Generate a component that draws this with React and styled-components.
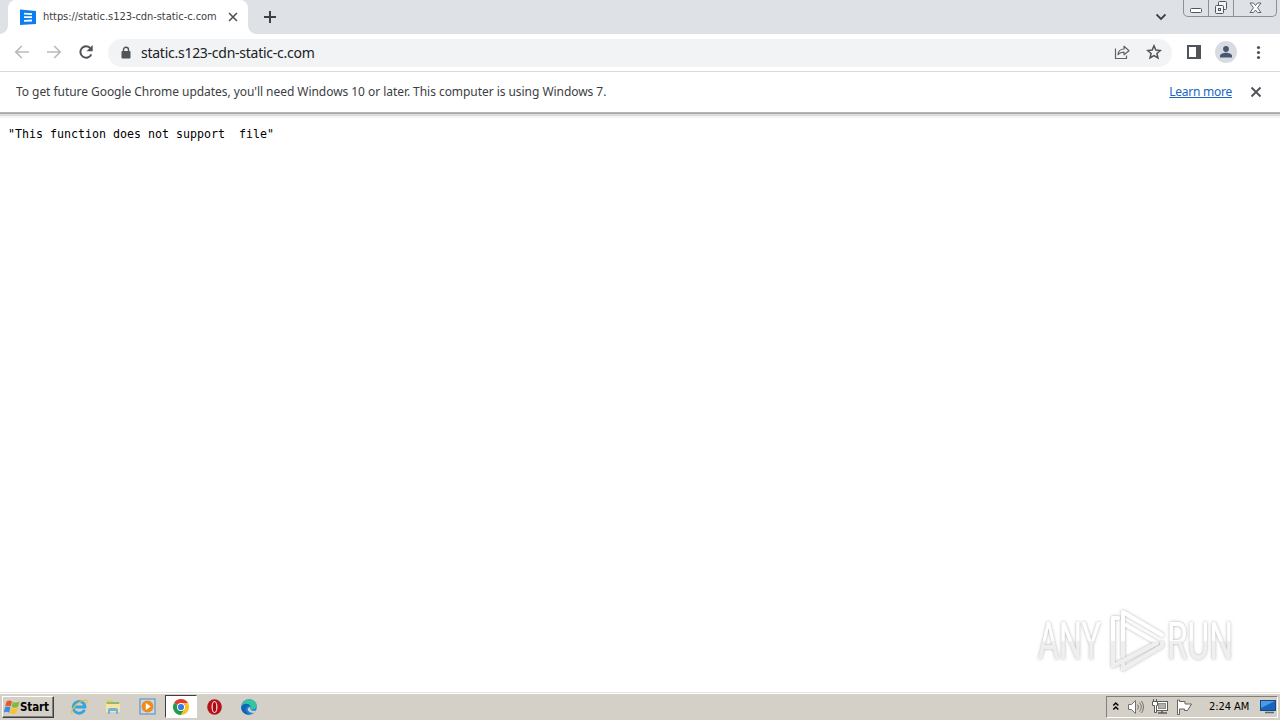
import React from 'react';
import styled, { createGlobalStyle } from 'styled-components';

const GlobalStyle = createGlobalStyle`
  * {
    box-sizing: border-box;
  }

  body {
    margin: 0;
    overflow: hidden;
    background: #fff;
    font-family: 'Noto Sans', 'Open Sans', sans-serif;
  }

  svg {
    display: block;
    flex: none;
  }
`;

const Desktop = styled.div`
  position: relative;
  width: 1280px;
  height: 720px;
  display: flex;
  flex-direction: column;
  background: #fff;
`;

const TabStrip = styled.div`
  height: 34px;
  display: flex;
  align-items: flex-start;
  padding-left: 8px;
  background: #dee1e6;
`;

const Tab = styled.div`
  position: relative;
  width: 240px;
  height: 34px;
  display: flex;
  align-items: center;
  padding-left: 12px;
  background: #fff;
  border-radius: 8px 8px 0 0;

  &::before,
  &::after {
    content: '';
    position: absolute;
    bottom: 0;
    width: 8px;
    height: 8px;
  }

  &::before {
    left: -8px;
    background: radial-gradient(circle at 0 0, transparent 7.5px, #fff 8px);
  }

  &::after {
    right: -8px;
    background: radial-gradient(circle at 100% 0, transparent 7.5px, #fff 8px);
  }
`;

const TabTitle = styled.span`
  width: 183px;
  margin-left: 7px;
  font: 11px/14px 'DejaVu Sans Condensed', 'DejaVu Sans', sans-serif;
  font-stretch: condensed;
  letter-spacing: -0.05px;
  white-space: nowrap;
  color: #3c4043;
`;

const NewTab = styled.div`
  padding: 10px 0 0 15px;
`;

const TabSearch = styled.div`
  margin-left: auto;
  padding: 12px 17px 0 0;
`;

const WindowButtons = styled.div`
  display: flex;
  width: 94px;
  height: 17px;
  margin-right: 3px;
  border: 1px solid #8d9097;
  border-top: 0;
  border-radius: 0 0 5px 5px;
`;

const WindowButton = styled.div`
  width: ${props => props.$width}px;
  display: flex;
  align-items: center;
  justify-content: center;
  border-right: 1px solid #8d9097;

  &:last-child {
    border-right: 0;
  }
`;

const Toolbar = styled.div`
  height: 38px;
  display: flex;
  align-items: center;
  padding-left: 14px;
  border-bottom: 1px solid #d9dadc;
`;

const NavButtons = styled.div`
  display: flex;
  gap: 16px;
  padding-bottom: 1px;
`;

const AddressBar = styled.div`
  width: 1064px;
  height: 28px;
  margin-left: 14px;
  display: flex;
  align-items: center;
  padding: 0 10px 0 13px;
  border-radius: 14px;
  background: #f1f3f4;
`;

const Url = styled.span`
  flex: 1;
  margin-left: 10px;
  font-size: 14px;
  line-height: 18px;
  letter-spacing: -0.26px;
  color: #202124;
`;

const AddressActions = styled.div`
  display: flex;
  gap: 16px;
  padding-bottom: 1px;
`;

const ToolbarActions = styled.div`
  display: flex;
  align-items: center;
  margin-left: 14px;
  padding-bottom: 1px;
  gap: 13px;
`;

const Avatar = styled.div`
  width: 22px;
  height: 22px;
  display: flex;
  align-items: center;
  justify-content: center;
  border-radius: 50%;
  background: #d8dce2;
`;

const InfoBar = styled.div`
  height: 40px;
  display: flex;
  align-items: center;
  padding: 0 16px;
  font-size: 12px;
  line-height: 16px;
  color: #3c4043;
`;

const InfoText = styled.span`
  flex: 1;
  letter-spacing: -0.05px;
`;

const LearnMore = styled.a`
  margin-right: 16px;
  letter-spacing: -0.25px;
  color: #1a66c2;
  text-decoration: underline;
`;

const Page = styled.main`
  flex: 1;
  padding: 15px 8px;
  background: linear-gradient(#b5b5b5 0 1px, #aaa 1px 2px, #dcdcdc 2px 4px, #f4f4f4 4px 6px, #fff 6px);
`;

const Message = styled.pre`
  margin: 0;
  font: 11.63px/14px 'DejaVu Sans Mono', 'Liberation Mono', monospace;
  color: #000;
`;

const Watermark = styled.div`
  position: absolute;
  left: 1030px;
  top: 600px;
`;

const Taskbar = styled.footer`
  height: 28px;
  display: flex;
  align-items: center;
  padding: 0 2px;
  border-top: 1px solid #e6e3dd;
  background: #d4d0c8;
  box-shadow: inset 0 1px 0 #fff;
`;

const StartButton = styled.div`
  width: 52px;
  height: 22px;
  display: flex;
  align-items: center;
  padding-left: 1px;
  border: 1px solid;
  border-color: #fff #404040 #404040 #fff;
  box-shadow: inset -1px -1px 0 #808080;
  font: bold 11.5px/14px 'DejaVu Sans Condensed', 'DejaVu Sans', sans-serif;
  font-stretch: condensed;
  letter-spacing: -0.1px;
  color: #000;
`;

const Launchers = styled.div`
  display: flex;
  margin-left: 9px;
  gap: 2px;
`;

const Launcher = styled.div`
  width: 32px;
  height: 23px;
  display: flex;
  align-items: center;
  justify-content: center;
  border: 1px solid;
  border-color: ${props => (props.$active ? '#404040 #fff #fff #404040' : 'transparent')};
  background: ${props => (props.$active ? '#fff' : 'transparent')};
`;

const Tray = styled.div`
  height: 22px;
  width: 172px;
  margin-left: auto;
  display: flex;
  align-items: center;
  padding-left: 5px;
  border: 1px solid;
  border-color: #808080 #fff #fff #808080;
`;

const TrayIcons = styled.div`
  display: flex;
  align-items: center;
  gap: 7px;
`;

const Clock = styled.span`
  width: 51px;
  margin-left: 16px;
  font: 11px/14px 'DejaVu Sans Condensed', 'DejaVu Sans', sans-serif;
  font-stretch: condensed;
  letter-spacing: -0.05px;
  white-space: nowrap;
  color: #000;
`;

const CloseIcon = ({ size = 16 }) => (
  <svg width={size} height={size} viewBox="0 0 16 16" stroke="#4d5156" strokeWidth="1.8">
    <path d="M3.5 3.5l9 9M12.5 3.5l-9 9" />
  </svg>
);

const BackIcon = ({ forward }) => (
  <svg width="16" height="16" viewBox="0 0 16 16" fill="none" stroke="#b8bbbe" strokeWidth="1.7">
    <path d={forward ? 'M1 8h13M8.2 2l6 6-6 6' : 'M15 8H2M7.8 2l-6 6 6 6'} />
  </svg>
);

const App = () => (
  <Desktop>
    <GlobalStyle />
    <TabStrip>
      <Tab>
        <svg width="16" height="16" viewBox="0 0 16 16">
          <path d="M0 .5L16 2v13L0 16z" fill="#0b7df2" />
          <path d="M4 4.7l8 .5M4 8.2h8M4 11.8l8-.3" stroke="#fff" strokeWidth="1.8" />
        </svg>
        <TabTitle>https://static.s123-cdn-static-c.com</TabTitle>
        <CloseIcon size={14} />
      </Tab>
      <NewTab>
        <svg width="14" height="14" viewBox="0 0 14 14" stroke="#3c4043" strokeWidth="2">
          <path d="M1 7h12M7 1v12" />
        </svg>
      </NewTab>
      <TabSearch>
        <svg width="10" height="10" viewBox="0 0 10 10" fill="none" stroke="#3c4043" strokeWidth="1.8">
          <path d="M.5 2.5L5 7l4.500-4.500" />
        </svg>
      </TabSearch>
      <WindowButtons>
        <WindowButton $width={25}>
          <svg width="13" height="13" viewBox="0 0 13 13" fill="#fff" stroke="#53565c">
            <rect x=".5" y="6.500" width="11" height="4" rx="1" />
          </svg>
        </WindowButton>
        <WindowButton $width={25}>
          <svg width="14" height="14" viewBox="0 0 14 14" fill="#f3f4f6" stroke="#53565c">
            <rect x="4.500" y=".5" width="8" height="8" rx="1" />
            <rect x="1.500" y="4.500" width="8" height="8" rx="1" />
            <rect x="4.500" y="7.500" width="2" height="2" />
          </svg>
        </WindowButton>
        <WindowButton $width={42}>
          <svg width="13" height="12" viewBox="0 0 13 12" fill="#fff" stroke="#62656b">
            <path d="M1 1h3.500l2 2.500 2-2.500H12L8.500 5.800 12 10.500H8.500l-2-2.500-2 2.500H1l3.500-4.700z" />
          </svg>
        </WindowButton>
      </WindowButtons>
    </TabStrip>

    <Toolbar>
      <NavButtons>
        <BackIcon />
        <BackIcon forward />
        <svg width="16" height="16" viewBox="0 0 16 16" fill="none">
          <path d="M13.300 10.300A5.700 5.700 0 1 1 12.600 4.500" stroke="#505357" strokeWidth="2" />
          <path d="M14.700 1v6.200H8.500z" fill="#505357" />
        </svg>
      </NavButtons>
      <AddressBar>
        <svg width="10" height="14" viewBox="0 0 10 14">
          <path d="M2.500 6V3.800a2.500 2.500 0 0 1 5 0V6" fill="none" stroke="#505357" strokeWidth="1.400" />
          <rect x=".5" y="5" width="9" height="7.500" rx="1" fill="#505357" />
        </svg>
        <Url>static.s123-cdn-static-c.com</Url>
        <AddressActions>
          <svg width="16" height="16" viewBox="0 0 16 16" fill="none" stroke="#5f6368" strokeWidth="1.200">
            <path d="M1.500 4.500v10h11v-3" />
            <path d="M4 10.700c.3-3.700 2.300-5.600 6-5.700V2.300l5 4.400-5 4V8.200c-2.800 0-4.400.6-6 2.500z" strokeLinejoin="round" />
          </svg>
          <svg width="16" height="16" viewBox="0 0 16 16" fill="none" stroke="#505357" strokeWidth="1.500">
            <path d="M8 1.800l1.800 4.300 4.600.4-3.500 3 1.100 4.500L8 11.600 4 14l1.100-4.500-3.500-3 4.600-.4z" />
          </svg>
        </AddressActions>
      </AddressBar>
      <ToolbarActions>
        <svg width="16" height="16" viewBox="0 0 16 16">
          <path d="M1 1h14v14H1zM3 3v10h7V3z" fill="#505357" fillRule="evenodd" />
        </svg>
        <Avatar>
          <svg width="12" height="12" viewBox="0 0 12 12" fill="#48566f">
            <circle cx="6" cy="3" r="2.900" />
            <path d="M0 11.500V10c0-2.200 3.500-3.200 6-3.200s6 1 6 3.200v1.500z" />
          </svg>
        </Avatar>
        <svg width="16" height="16" viewBox="0 0 16 16" fill="#505357">
          <circle cx="8.500" cy="3.500" r="1.600" />
          <circle cx="8.500" cy="8.500" r="1.600" />
          <circle cx="8.500" cy="13.500" r="1.600" />
        </svg>
      </ToolbarActions>
    </Toolbar>

    <InfoBar>
      <InfoText>
        To get future Google Chrome updates, you'll need Windows 10 or later. This computer is using Windows 7.
      </InfoText>
      <LearnMore>Learn more</LearnMore>
      <CloseIcon />
    </InfoBar>

    <Page>
      <Message>{'"This function does not support  file"'}</Message>
    </Page>

    <Watermark>
      <svg width="220" height="85" viewBox="0 0 220 85">
        <defs>
          <filter id="halo" x="-10%" y="-10%" width="120%" height="120%">
            <feDropShadow dx="0" dy="0" stdDeviation="1.8" floodColor="#777" floodOpacity=".6" />
          </filter>
          <linearGradient id="fade" x1="0" y1="10" x2="0" y2="72" gradientUnits="userSpaceOnUse">
            <stop offset=".49" stopColor="#fff" />
            <stop offset=".51" stopColor="#efefef" />
          </linearGradient>
        </defs>
        <g filter="url(#halo)" fill="url(#fade)" fontFamily="Roboto, sans-serif" fontWeight="400" fontSize="51">
          <text x="8" y="59" textLength="63" lengthAdjust="spacingAndGlyphs">ANY</text>
          <text x="137" y="59" textLength="66" lengthAdjust="spacingAndGlyphs">RUN</text>
          <g fill="none" stroke="url(#fade)" strokeWidth="4" strokeLinejoin="round" strokeLinecap="round">
            <path d="M93 56V12l39 23M96 25l31 18-44 23V18h5" />
            <path d="M132 43v3L93 69v-5" />
          </g>
        </g>
      </svg>
    </Watermark>

    <Taskbar>
      <StartButton>
        <svg width="16" height="16" viewBox="0 0 16 16">
          <path d="M2.500 2.500c2-1.500 3.900-1.300 5.500-.2L6.800 7.400c-1.500-1-3.500-1.100-5.600.2z" fill="#e8582c" />
          <path d="M8.800 2.700c1.900 1.200 4.200 1.200 6.700-.2l-1.400 5.300c-2.200 1.200-4.400 1.200-6.400 0z" fill="#83b934" />
          <path d="M1 8.500c2-1.300 4-1.100 5.500 0L5.200 13.700c-1.700-1.100-3.500-1.200-5.500 0z" fill="#3d8dd8" />
          <path d="M7.500 8.800c1.900 1.200 4.200 1.200 6.400 0l-1.400 5.300c-2.200 1.200-4.400 1.200-6.400 0z" fill="#f9c22c" />
        </svg>
        Start
      </StartButton>
      <Launchers>
        <Launcher>
          <svg width="18" height="18" viewBox="0 0 18 18" fill="none">
            <path d="M14.500 11.700A5.900 5.900 0 1 1 15 9H5" stroke="#35a5df" strokeWidth="2.800" />
            <path d="M2.500 16c-3.500-2 4-12 12-14 3-.4 2.800 1.700 1.600 3.500" stroke="#e8bd45" strokeWidth="1.200" />
          </svg>
        </Launcher>
        <Launcher>
          <svg width="17" height="17" viewBox="0 0 17 17">
            <path d="M1 2h6l1 2h7v10H1z" fill="#eacb6b" />
            <path d="M2 4h12v3H2z" fill="#86bd72" />
            <path d="M1 6h14v8H1z" fill="#f6e4a0" />
            <path d="M3 16v-4q0-2 2-2h6q2 0 2 2v4h-2v-3H5v3z" fill="#6db4df" />
          </svg>
        </Launcher>
        <Launcher>
          <svg width="17" height="17" viewBox="0 0 17 17">
            <rect x="1" y="1" width="15" height="15" fill="#c2ddf1" stroke="#5189b7" />
            <circle cx="8.500" cy="8.500" r="6" fill="#f28a18" />
            <path d="M6.800 5v7l5-3.500z" fill="#fff" />
          </svg>
        </Launcher>
        <Launcher $active>
          <svg width="16" height="16" viewBox="0 0 16 16">
            <path d="M8 8L1.070 4A8 8 0 0 1 14.930 4z" fill="#e33b2e" />
            <path d="M8 8L1.070 4A8 8 0 0 0 8 16l3.500-6z" fill="#229b4b" />
            <path d="M8 8l6.930-4A8 8 0 0 1 8 16l3.500-6z" fill="#fcc21b" />
            <path d="M8 4h6.930l.5 1H8z" fill="#fcc21b" />
            <circle cx="8" cy="8" r="4" fill="#fff" />
            <circle cx="8" cy="8" r="3.100" fill="#337de5" />
          </svg>
        </Launcher>
        <Launcher>
          <svg width="16" height="16" viewBox="0 0 16 16">
            <ellipse cx="7.500" cy="8" rx="7.300" ry="7.800" fill="#b51319" />
            <ellipse cx="7.500" cy="8" rx="3" ry="6" fill="#f8d5d4" />
            <ellipse cx="7.500" cy="8" rx="1.700" ry="5" fill="#a30d13" />
          </svg>
        </Launcher>
        <Launcher>
          <svg width="16" height="16" viewBox="0 0 16 16">
            <circle cx="8" cy="8" r="7.800" fill="#1687d0" />
            <path d="M.3 8C.8 3.500 4 .2 8 .2c5 0 8 3.500 7.800 6.800-.1 2.700-3 4.200-6.300 3.300C11 8 9 5.500 6 5.500 3.500 5.500 1.500 6.300.3 8z" fill="#35c3a0" />
            <path d="M.3 8c1.500-3.800 7-4.200 9-1-3.200-.2-5 1.200-4.600 3.500.4 2.500 2 4.500 4.300 5.200C4 16.200-.2 12.500.3 8z" fill="#1363b5" />
            <path d="M9.300 8.200c-.6 3.300 3 4.300 5.800 3.200l-1 2.200c-4 1.400-7.800-1.200-7.200-3.800.2-1 1.200-1.700 2.400-1.600z" fill="#d4d0c8" />
          </svg>
        </Launcher>
      </Launchers>
      <Tray>
        <TrayIcons>
          <svg width="8" height="12" viewBox="0 0 8 12" fill="none" stroke="#000" strokeWidth="1.500">
            <path d="M1.300 4.500l2.500-2.500 2.500 2.500M1.300 8.500L3.800 6l2.500 2.500" />
          </svg>
          <svg width="18" height="16" viewBox="0 0 18 16" fill="none" stroke="#73716d">
            <path d="M1.500 5.500h3l4-4v13l-4-4h-3z" fill="#fff" />
            <path d="M10.500 5.500q2 2.500 0 5M12.500 3.500q3.500 4.500 0 9M14.500 2q4 6 0 12" />
          </svg>
          <svg width="17" height="16" viewBox="0 0 17 16" fill="none" stroke="#5b5a57">
            <rect x="4.500" y="2.500" width="11" height="9" fill="#fff" />
            <rect x="6.500" y="4.500" width="7" height="5" fill="#b3b1ac" stroke="#8f8d89" />
            <path d="M6 14h9M10 12v2" strokeWidth="1.500" />
            <path d="M.5 2.500h5v4h-1v7h-2v-7h-2zM1.500 2.500V0M4.500 2.500V0" fill="#fff" />
          </svg>
          <svg width="17" height="16" viewBox="0 0 17 16" fill="#fff" stroke="#65635f">
            <path d="M1.500 1v14.500h2V10h5v1.500h3L15.500 5H9V2.500H3.500V1z" />
          </svg>
        </TrayIcons>
        <Clock>2:24 AM</Clock>
        <svg width="16" height="15" viewBox="0 0 16 15">
          <rect x=".5" y="1.500" width="15" height="10" fill="#1764bd" stroke="#174884" />
          <path d="M1 2h14L1 9z" fill="#4c9ae3" />
          <path d="M5 13.500h9" stroke="#5b6778" strokeWidth="1.500" />
        </svg>
      </Tray>
    </Taskbar>
  </Desktop>
);

export default App;
